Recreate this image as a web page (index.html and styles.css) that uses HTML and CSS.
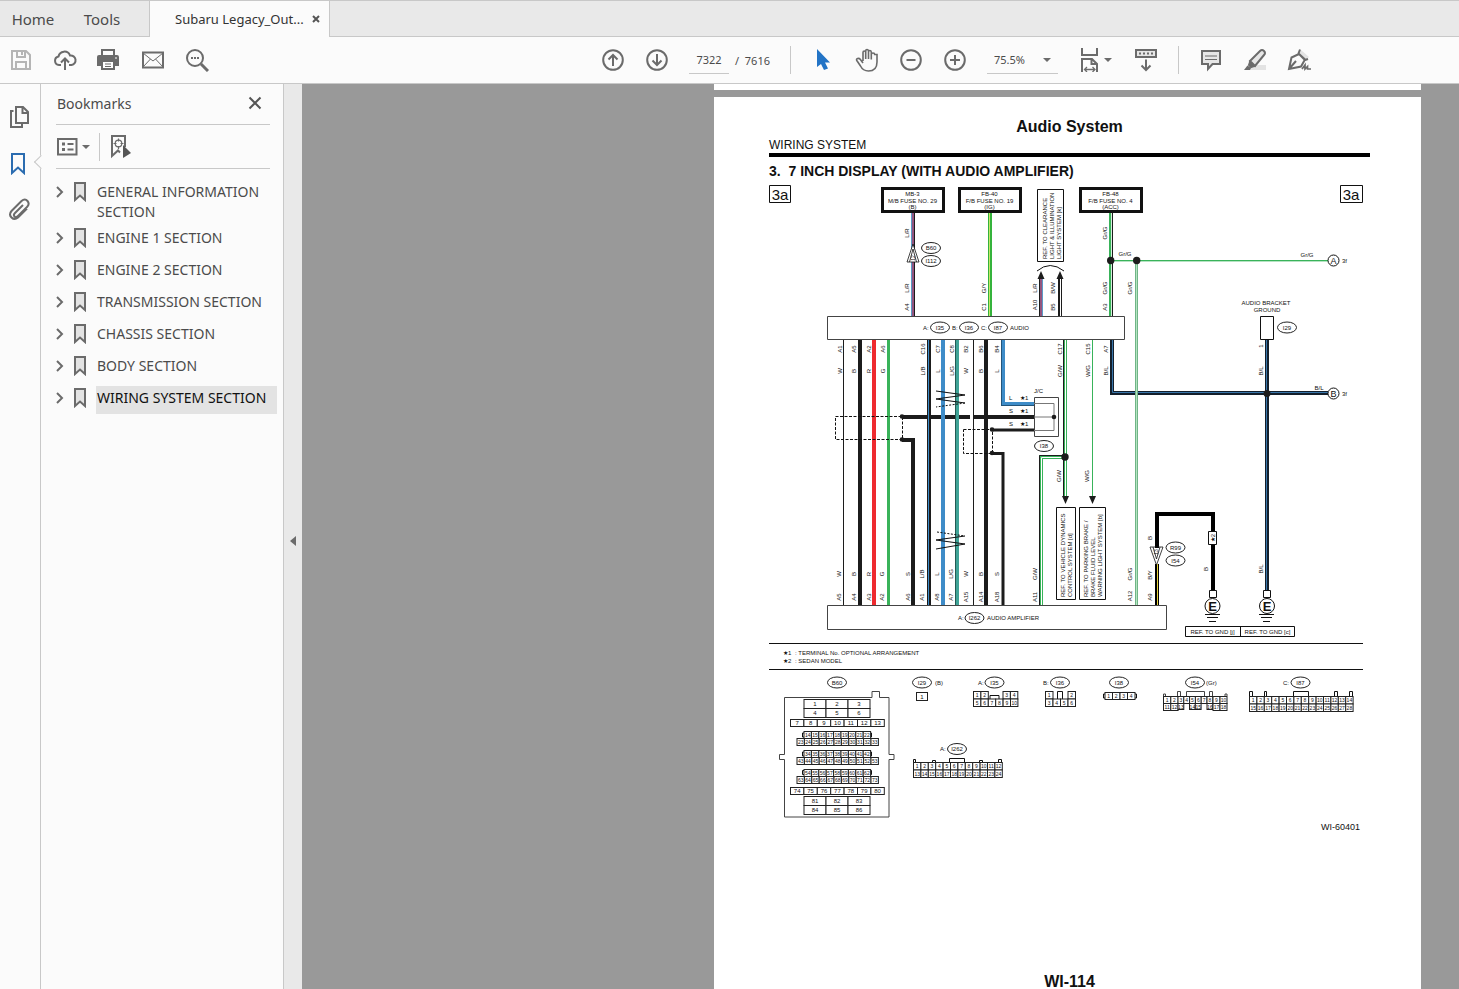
FILE: index.html
```
<!DOCTYPE html>
<html lang="en">

<head>
	<title>Subaru Legacy_Outback</title>
	<meta charset="utf-8">
	<meta name="viewport" content="width=device-width,initial-scale=1">
	<link rel="stylesheet" href="styles.css">
</head>

<body>
	<nav class="tabs">
		<button class="tab home">Home</button>
		<button class="tab tools">Tools</button>
		<div class="tab doc">
			<span>Subaru Legacy_Out...</span>
			<button class="tab-close" aria-label="Close tab"><svg width="8" height="8" viewBox="0 0 8 8"><path d="M1 1l6 6M7 1L1 7" stroke="#555" stroke-width="2"/></svg></button>
		</div>
	</nav>

	<header class="toolbar">
		<button class="icon" aria-label="Save"><svg viewBox="0 0 24 24"><g class="faint"><path d="M3 3h14l4 4v14H3z"/><path d="M8 3v6h8V3M13 4v3M7 21v-7h10v7"/></g></svg></button>
		<button class="icon" aria-label="Upload"><svg viewBox="0 0 24 24"><path d="M8 17H6a4.300 4.300 0 0 1-.5-8.500A6 6 0 0 1 17 7.500a4.800 4.800 0 0 1 1.500 9.500H16M12 22V11M8 14.500l4-4 4 4"/></svg></button>
		<button class="icon" aria-label="Print"><svg viewBox="0 0 24 24"><path d="M5 8V2h12v6"/><path d="M0 9Q0 7 2 7h18Q22 7 22 9v9H0z" fill="#6b6b6b" stroke="none"/><path d="M5 13h12v8H5z" fill="#fff"/><path d="M8 16h6M8 18.500h6" stroke-width="1"/><path d="M18 10h2" stroke="#fff" stroke-width="1"/></svg></button>
		<button class="icon" aria-label="Mail"><svg viewBox="0 0 24 24"><path d="M2 4.500h20v15H2z"/><path d="M2 5l10 8 10-8M2 19l7.500-8M22 19l-7.500-8" stroke-width="1"/></svg></button>
		<button class="icon" aria-label="Search"><svg viewBox="0 0 24 24"><circle cx="10" cy="10" r="8"/><path d="M16 16l7 7" stroke-width="3"/><path d="M6 10h2M9 10h2M12 10h2"/></svg></button>

		<div class="main-tools">
			<button class="icon" aria-label="Previous page"><svg viewBox="0 0 24 24"><circle cx="12" cy="12" r="9.800"/><path d="M12 18V7M7.500 11.500L12 7l4.500 4.500"/></svg></button>
			<button class="icon" aria-label="Next page"><svg viewBox="0 0 24 24"><circle cx="12" cy="12" r="9.800"/><path d="M12 6v11M7.500 12.500L12 17l4.500-4.500"/></svg></button>
			<div class="pager">
				<input type="text" value="7322" aria-label="Page number">
				<span>/&nbsp; 7616</span>
			</div>
			<span class="sep"></span>
			<button class="icon" aria-label="Select"><svg viewBox="0 0 24 24"><path d="M6 1v18l4-3 3 6 4-1.500-3-6h5z" fill="#2374c6" stroke="none"/></svg></button>
			<button class="icon" aria-label="Hand"><svg viewBox="0 0 24 24"><path d="M8 13V4.500q0-1.500 1.300-1.500t1.400 1.500V11V3q0-1.500 1.300-1.500T13.500 3v8V4q0-1.500 1.300-1.500T16.300 4v7.500V6.500q0-1.500 1.700-1.500t1.700 1.500H22V14q0 9-8.500 9-5.500 0-8-5L1.800 12.500q-.8-1.500.8-2t2.800 1L8 15" stroke-width="1.600"/></svg></button>
			<button class="icon" aria-label="Zoom out"><svg viewBox="0 0 24 24"><circle cx="12" cy="12" r="9.800"/><path d="M7.500 12h9"/></svg></button>
			<button class="icon" aria-label="Zoom in"><svg viewBox="0 0 24 24"><circle cx="12" cy="12" r="9.800"/><path d="M7 12h10M12 7v10"/></svg></button>
			<div class="zoom">
				<select aria-label="Zoom level"><option>75.5%</option></select>
				<i class="caret"></i>
			</div>
			<button class="icon wide" aria-label="Fit page"><svg viewBox="0 0 24 24"><path d="M4 0v7h15V0M4 24V11h10l5 5v8M13.500 11v5H19"/><path d="M7 21.500h10M9 19l-2.500 2.500L9 24M14.500 19l2.500 2.500-2.500 2.500" stroke-width="1.300"/></svg><i class="caret"></i></button>
			<button class="icon" aria-label="Scroll"><svg viewBox="0 0 24 24"><path d="M2 2h20v7H2z" fill="#e6e6e6"/><path d="M5 5.500h14" stroke-dasharray="2 2"/><path d="M12 11.500v10M7.500 17.500l4.500 4.500 4.500-4.500"/></svg></button>
			<span class="sep"></span>
			<button class="icon" aria-label="Comment"><svg viewBox="0 0 24 24"><path d="M3 3h18v13h-7.500L9 21v-5H3z" fill="#e6e6e6"/><path d="M6 8h12M6 11.500h12" stroke-width="1.200"/></svg></button>
			<button class="icon" aria-label="Highlight"><svg viewBox="0 0 24 24"><path d="M9 17h14v5H4z" fill="#e3e3e3" stroke="none"/><path d="M7 13L17 3q2-2 4 0t0 4l-9 11z" fill="#e6e6e6"/><path d="M7 14l4 4-3 1-2-2z" fill="#6b6b6b"/><path d="M1 22l3.500-4.500L8 20l-1 2z" fill="#6b6b6b" stroke="none"/></svg></button>
			<button class="icon" aria-label="Sign"><svg viewBox="0 0 24 24"><path d="M14 2l8 7-3 3-8-7z" fill="#e3e3e3" stroke="none"/><path d="M2 21L4.500 9.500 12 6l6 5.500-4 7zM2 21l7-8M13 1.500l-1.500 4L18 12l3-1"/><path d="M15 21l3-4v4l2.500-2.500v2.500H24" stroke-width="1.700"/></svg></button>
		</div>
	</header>

	<div class="workspace">
		<aside class="rail">
			<button class="icon" aria-label="Page thumbnails"><svg viewBox="0 0 24 24"><path d="M9 2h7l5 5v11H9zM15.500 2v6H21M6.500 6H4v16h11v-3"/></svg></button>
			<button class="icon active" aria-label="Bookmarks"><svg viewBox="0 0 24 24"><path d="M5 3h12v19l-6-5.500L5 22z" stroke="#2b6cb0"/></svg></button>
			<button class="icon" aria-label="Attachments"><svg viewBox="0 0 24 24"><path d="M16 8l-8 8q-2 2-.5 3.500t3.500-.5l9-9q3-3 .5-6t-6 0l-10 10q-3 3.500 0 6.500t6.500 0l9-9"/></svg></button>
		</aside>

		<section class="panel">
			<div class="panel-head">
				<h2>Bookmarks</h2>
				<button class="panel-close" aria-label="Close panel"><svg width="14" height="14" viewBox="0 0 14 14"><path d="M1.500 1.500l11 11M12.500 1.500l-11 11" stroke="#555" stroke-width="2"/></svg></button>
			</div>
			<div class="panel-tools">
				<button class="icon wide" aria-label="Options"><svg viewBox="0 0 24 24"><path d="M2 4h18.500v15.500H2z"/><path d="M6 9h3M6 14.500h3" stroke-width="3"/><path d="M11.500 9h6M11.500 14.500h6"/></svg><i class="caret"></i></button>
				<span class="sep"></span>
				<button class="icon" aria-label="Find current bookmark"><svg viewBox="0 0 24 24"><path d="M13 17.500l-2-2L5 21V1h13v11"/><circle cx="11.500" cy="8.500" r="3.300" stroke-width="1.200"/><path d="M11.500 3.500v3M11.500 11v3M6.500 8.500h3M13.500 8.500h3" stroke-width="1.200"/><path d="M16 10v13l8-5z" fill="#555" stroke="none"/></svg></button>
			</div>
			<ul class="bookmarks" id="bookmarks"></ul>
		</section>

		<button class="gutter" aria-label="Collapse panel"></button>

		<main class="viewer">
			<div class="sheet previous"></div>
			<article class="sheet">
				<h1>Audio System</h1>
				<p class="chapter">WIRING SYSTEM</p>
				<h3>3.&nbsp; 7 INCH DISPLAY (WITH AUDIO AMPLIFIER)</h3>
				<svg class="diagram" viewBox="769 184 601 651" role="img" aria-label="Audio system wiring diagram">
					<!-- boxes -->
					<g class="box">
						<path d="M769.500 185.500h21v17h-21zM1340.500 185.500h22v17h-22z"/>
						<path d="M882.500 188.500h61v23h-61zM959.500 188.500h61v23h-61zM1080.500 188.500h61v23h-61z" stroke-width="3"/>
						<path d="M1037.500 189.500h26v72h-26zM1056.500 507.500h19v92h-19zM1079.500 507.500h26v92h-26z"/>
						<path d="M827.500 316.500h297v23h-297zM827.500 605.500h339v24h-339z" stroke="#444"/>
						<path d="M1260.500 316.500h13v23h-13z"/>
						<path d="M1185.500 626.500h109v10h-109zM1240.500 626.500v10"/>
						<path d="M769 643.500h594M769 669.500h594"/>
						<path d="M1037 271q13-11 27 0"/>
					</g>
					<g id="wires"></g>
					<!-- shields and junction -->
					<g class="box">
						<path d="M835.500 416.500h67v23h-67zM963.500 429.500h29v24h-29z" stroke-dasharray="3 1.500"/>
						<path d="M1034.500 397.500h24v39h-24z" fill="#fff" stroke="#444"/>
						<path d="M1034 403.500h20v27h-20M1034 417h20" stroke="#777"/>
						<path d="M936 391l29 4-29 4 29 4M965 536l-29 4 29 4-29 5"/>
						<path d="M965 403l-29 4M937 532l28 4" stroke-dasharray="2 1.500"/>
						<path d="M913 244l6 18h-12zM913 249l3.500 13M913 249l-3.500 13M1150 547h13l-6.500 18zM1153 547l3.500 12 3.500-12" fill="#fff" stroke-width="0.800"/>
						<path d="M1208.500 531.500h8v13h-8zM1209.500 590.500h7v7h-7zM1263.500 590.500h7v7h-7z" fill="#fff"/>
						<path d="M1205 614.500h15M1207 617.500h11M1209 621.500h7M1259 614.500h15M1261 617.500h11M1263 621.500h7"/>
						<circle cx="1212.500" cy="606" r="7.500" fill="#fff"/>
						<circle cx="1267" cy="606" r="7.500" fill="#fff"/>
						<circle cx="1333.500" cy="260.500" r="5.500" fill="#fff"/>
						<circle cx="1333.500" cy="393.500" r="5.500" fill="#fff"/>
					</g>
					<!-- junction dots and arrow heads -->
					<g class="solid">
						<circle cx="1110.700" cy="260.500" r="3.700"/><circle cx="1136.700" cy="260.500" r="3.700"/>
						<circle cx="1267" cy="393.500" r="3.500"/><circle cx="1065" cy="457" r="3.700"/>
						<circle cx="902" cy="416.500" r="2.300"/><circle cx="902" cy="439.500" r="2.300"/>
						<circle cx="992" cy="429.500" r="2.300"/><circle cx="992" cy="453" r="2.300"/><circle cx="1054" cy="417" r="2.300"/>
						<path d="M1041 271l3.500 8h-7zM1060 271l3.500 8h-7zM1065.500 504l-3.500-8h7zM1092.500 504l-3.500-8h7z"/>
					</g>
					<g id="labels"></g>
					<!-- connector housings -->
					<g class="box">
						<path d="M784.500 697.500h87.500v-6h7.500v6h9.500v57h5v5h-5v57.500h-104.500v-57.500h-5v-5h5z" stroke="#444"/>
						<path d="M990 699v-3.500h9v3.500M1057.500 699v-7.500h5v7.500M1105 694h-1.500v4h1.500M1135 694h1.500v4h-1.500"/>
						<path d="M1163.500 696v-2h2v2M1177.500 696v-4.500h3v4.500M1186.500 696v-4.500h18v4.500M1209.500 696v-4.500h3v4.500M1225 696v-2h2v2" stroke="#444"/>
						<path d="M1249.500 696v-4.500h3v4.500M1264.500 696v-4.500h2v4.500M1293.500 696v-4.500h15v4.500M1334.500 696v-4.500h3v4.500M1349.500 696v-4.500h3v4.500"/>
						<path d="M913.500 762v-2.500h2v2.500M932.500 762v-1.500h3v1.500M949.500 762v-3.500h15v3.500M979.500 762v-1.500h3v1.500M998.500 762v-2.500h3v2.500"/>
						<path d="M804 733h-1.500v4h1.500M804 752h-1.500v4h1.500M804 770.500h-1.500v4h1.500M870.500 733h1v4h-1M870.500 752h1v4h-1M870.500 770.500h1v4h-1"/>
					</g>
					<g id="pins"></g>
				</svg>
				<footer>WI-114</footer>
			</article>
		</main>
	</div>
	<script src="script.js"></script>
</body>

</html>
```
FILE: styles.css
```
* {
	box-sizing: border-box;
}

body {
	margin: 0;
	height: 100vh;
	overflow: hidden;
	display: flex;
	flex-direction: column;
	background-color: #fbfbfb;
	color: #4b4b4b;
	font-family: "Noto Sans", sans-serif;
	font-size: 14px;
}

button {
	padding: 0;
	border: 0;
	background: none;
	color: inherit;
	font-family: inherit;
}

h1, h2, h3, p, ul {
	margin: 0;
	padding: 0;
	font-weight: normal;
}

/* tab strip */
.tabs {
	display: flex;
	height: 37px;
	flex-shrink: 0;
	background-color: #e9e9e9;
	border-top: 1px solid #c8c8c8;
	border-bottom: 1px solid #c8c8c8;
}

.tab {
	font-size: 15px;
}

.home {
	width: 66px;
}

.tools {
	width: 83px;
	padding-right: 11px;
}

.doc {
	width: 181px;
	height: 36px;
	display: flex;
	align-items: center;
	justify-content: space-between;
	padding: 0 9px 0 25px;
	background-color: #fbfbfb;
	border-left: 1px solid #c8c8c8;
	border-right: 1px solid #c8c8c8;
	font-size: 13px;
	color: #333;
}

.tab-close {
	display: flex;
}

/* toolbar */
.toolbar {
	display: flex;
	align-items: center;
	gap: 20px;
	height: 47px;
	flex-shrink: 0;
	padding-left: 9px;
	border-bottom: 1px solid #c8c8c8;
}

.main-tools {
	display: flex;
	align-items: center;
	gap: 20px;
	margin-left: 372px;
}

.icon {
	width: 24px;
	height: 24px;
	flex-shrink: 0;
	display: flex;
	align-items: center;
	justify-content: space-between;
}

.icon svg {
	width: 24px;
	height: 24px;
	flex-shrink: 0;
	fill: none;
	stroke: #6b6b6b;
	stroke-width: 2;
}

.wide {
	width: 34px;
	margin-right: 2px;
}

.faint {
	stroke: #b5b5b5;
}

.caret {
	border: 4px solid transparent;
	border-top: 4px solid #6b6b6b;
	border-bottom: 0;
}

.sep {
	width: 1px;
	height: 28px;
	background-color: #c8c8c8;
}

.pager {
	display: flex;
	align-items: center;
	gap: 6px;
	font-size: 11px;
}

.pager input {
	width: 40px;
	height: 28px;
	padding: 0;
	border: 0;
	border-bottom: 1px solid #c8c8c8;
	background: none;
	text-align: center;
	font: inherit;
	color: inherit;
}

.pager span {
	width: 35px;
	white-space: nowrap;
}

.zoom {
	display: flex;
	align-items: center;
	width: 71px;
	height: 28px;
	padding: 0 7px;
	border-bottom: 1px solid #c8c8c8;
}

.zoom select {
	flex: 1;
	appearance: none;
	border: 0;
	background: none;
	font-family: inherit;
	font-size: 11px;
	color: inherit;
}

/* work area */
.workspace {
	flex: 1;
	display: flex;
	min-height: 0;
}

.rail {
	width: 41px;
	display: flex;
	flex-direction: column;
	gap: 22px;
	padding: 21px 0 0 7px;
	border-right: 1px solid #c8c8c8;
}

.active {
	position: relative;
}

/* notch that points from the panel to the open tab */
.active::after {
	content: "";
	position: absolute;
	left: 29px;
	top: 6px;
	width: 9px;
	height: 9px;
	background-color: #fbfbfb;
	border-left: 1px solid #c8c8c8;
	border-bottom: 1px solid #c8c8c8;
	transform: rotate(45deg);
}

.panel {
	width: 243px;
	padding-left: 15px;
	border-right: 1px solid #c8c8c8;
}

.panel-head,
.panel-tools {
	display: flex;
	align-items: center;
	margin-right: 13px;
	border-bottom: 1px solid #c8c8c8;
}

.panel-head {
	height: 41px;
	justify-content: space-between;
	padding: 0 8px 2px 1px;
}

.panel-head h2 {
	font-size: 14px;
}

.panel-close {
	display: flex;
}

.panel-tools {
	height: 44px;
	gap: 7px;
}

.bookmarks {
	list-style: none;
	display: flex;
	flex-direction: column;
	gap: 4px;
	padding: 11px 6px 0 0;
}

.bookmarks li {
	display: flex;
	align-items: flex-start;
}

.bookmarks svg {
	flex-shrink: 0;
	margin-top: 2px;
}

.bookmarks a {
	flex: 1;
	min-height: 28px;
	margin-left: 8px;
	padding: 2px 0 0 1px;
	line-height: 20px;
	color: inherit;
	text-decoration: none;
}

.bookmarks .current {
	background-color: #e3e3e3;
	color: #111;
}

.gutter {
	width: 18px;
	display: flex;
	align-items: center;
	justify-content: center;
	padding-top: 8px;
	background-color: #e9e9e9;
}

.gutter::after {
	content: "";
	border: 5px solid transparent;
	border-right: 6px solid #6b6b6b;
	border-left: 0;
}

/* document */
.viewer {
	flex: 1;
	min-width: 0;
	display: flex;
	flex-direction: column;
	align-items: flex-end;
	gap: 7px;
	padding-right: 38px;
	overflow: hidden;
	background-color: #999;
}

.sheet {
	width: 707px;
	flex: 1;
	padding: 20px 51px 0 55px;
	background-color: #fff;
	color: #111;
	font-family: "Liberation Sans", Arial, sans-serif;
}

.previous {
	flex: none;
	height: 6px;
	padding: 0;
}

.sheet h1 {
	font-size: 16px;
	font-weight: bold;
	line-height: 20px;
	text-align: center;
}

.chapter {
	padding-top: 1px;
	font-size: 12px;
	line-height: 15px;
	border-bottom: 4px solid #000;
}

.sheet h3 {
	padding-top: 4px;
	font-size: 14px;
	font-weight: bold;
	line-height: 20px;
}

.diagram {
	display: block;
	width: 100%;
	margin-top: 3px;
	fill: #111;
	font-size: 6px;
}

.box {
	fill: none;
	stroke: #111;
}

.solid {
	fill: #1c1c1c;
}

.bubble {
	fill: #fff;
	stroke: #222;
}

.pin {
	fill: #fff;
	stroke: #222;
	stroke-width: 1;
}

.middle {
	text-anchor: middle;
}

.small {
	font-size: 5px;
}

.figure-no {
	font-size: 9px;
}

.mark {
	font-size: 15px;
}

.earth {
	font-size: 13px;
	font-weight: bold;
}

footer {
	margin-top: 137px;
	text-align: center;
	font-size: 16px;
	font-weight: bold;
	line-height: 20px;
}
```
FILE: script.js
```
var NS = "http://www.w3.org/2000/svg";

function add(parent, name, attrs, text) {
	var el = document.createElementNS(NS, name);
	for (var key in attrs) {
		el.setAttribute(key, attrs[key]);
	}
	if (text !== undefined) {
		el.textContent = text;
	}
	document.getElementById(parent).appendChild(el);
}

// bookmark list
["GENERAL INFORMATION SECTION", "ENGINE 1 SECTION", "ENGINE 2 SECTION", "TRANSMISSION SECTION",
	"CHASSIS SECTION", "BODY SECTION", "WIRING SYSTEM SECTION"].forEach(function (name, i) {
	var li = document.createElement("li");
	li.innerHTML = '<svg width="32" height="20" viewBox="0 0 32 20" fill="none" stroke="#6b6b6b" stroke-width="2">' +
		'<path d="M1 5l5 5-5 5"/><path d="M19 1h10v17l-5-4.500-5 4.500z" fill="#e3e3e3"/></svg>' +
		'<a href="#"' + (i == 6 ? ' class="current"' : '') + '>' + name + '</a>';
	document.getElementById("bookmarks").appendChild(li);
});

// wires: path, then colour and width pairs painted over each other
var black = "#1c1c1c", blue = "#3e8cc8", green = "#39b35a", red = "#ee2a2f";
function wire(d) {
	for (var i = 1; i < arguments.length; i += 2) {
		add("wires", "path", { d: d, fill: "none", stroke: arguments[i], "stroke-width": arguments[i + 1] });
	}
}
wire("M911.500 213v103", "#5b9bc8", 1);
wire("M913 213v103", "#93557f", 2);
wire("M914.500 213v103", black, 1);
wire("M990 213v103", "#35b33c", 4);
wire("M989.500 213v103", "#c8e66a", 1);
wire("M1041 278v38", black, 4);
wire("M1041 278v38", "#93557f", 2);
wire("M1042.500 278v38", "#5b9bc8", 1);
wire("M1060 278v38", black, 4);
wire("M1060.500 278v38", "#fff", 1);
wire("M1110 213v103", green, 2);
wire("M1111.500 213v103", "#d8eedd", 1);
wire("M1112.500 213v103", black, 1);
wire("M1110 260.500h218", green, 1);
wire("M1110 261.500h218", "#b5e3c2", 1);
wire("M1112 340v53h216", "#14202c", 4);
wire("M1112.500 340v52.500h215.500", "#3976ab", 1);
wire("M1267 340v251", "#14202c", 4);
wire("M1266.500 340v251", "#3976ab", 1);
wire("M1136.500 260v345", "#6fb586", 3, "#b5e3c2", 1);

wire("M843.500 340v265", black, 1);
wire("M860 340v265", black, 4);
wire("M874 340v265", red, 4);
wire("M888.500 340v265", green, 3);
wire("M902 417h68M974 417h60", black, 4);
wire("M902 440h11v165", black, 4);
wire("M929 340v265", black, 4);
wire("M928.500 340v265", blue, 1);
wire("M943 340v265", blue, 4);
wire("M957 340v265", "#245b54", 4);
wire("M957.500 340v265", "#3fa396", 3);
wire("M973.500 340v265", black, 1);
wire("M986 340v265", black, 4);
wire("M1003 340v64h31", "#24557a", 4);
wire("M1003.500 340v63.500h31", blue, 3);
wire("M992 430h42", black, 3);
wire("M992 453.500h11v151.500", black, 3);
wire("M1065 340v157", green, 4);
wire("M1065.500 340v157", "#fff", 1);
wire("M1063.500 340v157", black, 1);
wire("M1065 457h-24v148", green, 4);
wire("M1065 457.500h-23.500v147.500", "#fff", 1);
wire("M1065 455.500h-25.500v149.500", black, 1);
wire("M1092.500 340v157", green, 1);
wire("M1157 548v-34h56v77", "#000", 4);
wire("M1157 564v41", "#000", 4);
wire("M1157.500 564v41", "#e6d33c", 1);

// horizontal and vertical labels
function label(x, y, text, cls) {
	add("labels", "text", { x: x, y: y, "class": cls || "" }, text);
}
function upright(x, y, text, cls) {
	add("labels", "text", { x: 0, y: 0, transform: "translate(" + x + " " + y + ") rotate(-90)", "class": cls || "middle" }, text);
}
function bubble(x, y, text) {
	add("labels", "ellipse", { cx: x, cy: y, rx: 9.5, ry: 5.5, "class": "bubble" });
	label(x, y + 2, text, "middle");
}

[[912.500, "MB-3", "M/B FUSE NO. 29", "(B)"], [989.500, "FB-40", "F/B FUSE NO. 19", "(IG)"],
	[1110.500, "FB-48", "F/B FUSE NO. 4", "(ACC)"]].forEach(function (f) {
	label(f[0], 196, f[1], "middle");
	label(f[0], 203, f[2], "middle");
	label(f[0], 209, f[3], "middle");
});
label(780, 200, "3a", "middle mark");
label(1351, 200, "3a", "middle mark");
upright(1047, 259, "REF. TO CLEARANCE", "ref");
upright(1054, 259, "LIGHT & ILLUMINATION", "ref");
upright(1061, 259, "LIGHT SYSTEM [k]", "ref");
upright(1065, 597, "REF. TO VEHICLE DYNAMICS", "ref");
upright(1072, 597, "CONTROL SYSTEM [d]", "ref");
upright(1088, 597, "REF. TO PARKING BRAKE /", "ref");
upright(1095, 597, "BRAKE FLUID LEVEL", "ref");
upright(1102, 597, "WARNING LIGHT SYSTEM [b]", "ref");

// [x, centre y, text]
[[909, 233, "L/R"], [909, 288, "L/R"], [909, 307, "A4"], [986, 288, "G/Y"], [986, 307, "C1"],
	[1037, 288, "L/R"], [1037, 305, "A10"], [1055, 288, "B/W"], [1055, 307, "B5"],
	[1107, 233, "Gr/G"], [1107, 288, "Gr/G"], [1107, 307, "A3"], [1132, 288, "Gr/G"],
	[1263, 346, "1"], [1263, 371, "B/L"], [1263, 569, "B/L"], [1061, 476, "G/W"], [1089, 476, "W/G"],
	[1132, 574, "Gr/G"], [1132, 596, "A12"], [1152, 538, "B"], [1152, 575, "B/Y"], [1152, 597, "A9"],
	[1208, 569, "B"], [1215, 538, "★2"]].forEach(function (l) {
	upright(l[0], l[1], l[2]);
});
upright(915, 258, "12", "middle small");
upright(1158, 552, "13", "middle small");
// pins leaving the audio unit
[[842, "A1", "W"], [856, "A5", "B"], [871, "A2", "R"], [885, "A6", "G"], [925, "C16", "L/B"], [940, "C7", "L"],
	[954, "C8", "L/G"], [968, "B2", "W"], [983, "B6", "B"], [999, "B4", "L"], [1062, "C17", "G/W"],
	[1090, "C15", "W/G"], [1108, "A7", "B/L"]].forEach(function (p) {
	upright(p[0], 349, p[1]);
	upright(p[0], 371, p[2]);
});
// pins entering the amplifier
[[841, "A5", "W"], [856, "A4", "B"], [871, "A3", "R"], [884, "A2", "G"], [910, "A6", "S"], [924, "A1", "L/B"],
	[939, "A8", "L"], [953, "A7", "L/G"], [968, "A15", "W"], [983, "A14", "B"], [999, "A18", "S"],
	[1037, "A11", "G/W"]].forEach(function (p) {
	upright(p[0], 574, p[2]);
	upright(p[0], 597, p[1]);
});

label(1125, 256, "Gr/G", "middle");
label(1307, 257, "Gr/G", "middle");
label(1319, 390, "B/L", "middle");
label(1342, 263, "3f", "page-ref");
label(1342, 396, "3f", "page-ref");
label(1333.500, 264, "A", "middle figure-no");
label(1333.500, 397, "B", "middle figure-no");
label(1266, 305, "AUDIO BRACKET", "middle");
label(1267, 312, "GROUND", "middle");
label(1034, 393, "J/C");
label(1009, 400, "L");
label(1009, 413, "S");
label(1009, 426, "S");
label(1020, 400, "★1");
label(1020, 413, "★1");
label(1020, 426, "★1");
label(1212.500, 611, "E", "middle earth");
label(1267, 611, "E", "middle earth");
label(1212.500, 634, "REF. TO GND [j]", "middle");
label(1267.500, 634, "REF. TO GND [c]", "middle");
label(783, 655, "★1");
label(795, 655, ": TERMINAL No. OPTIONAL ARRANGEMENT");
label(783, 663, "★2");
label(795, 663, ": SEDAN MODEL");
label(923, 330, "A:");
label(952, 330, "B:");
label(981, 330, "C:");
label(1010, 330, "AUDIO");
label(958, 620, "A:");
label(987, 620, "AUDIO AMPLIFIER");
label(935, 685, "(B)");
label(978, 685, "A:");
label(1043, 685, "B:");
label(1206, 685, "(Gr)");
label(1283, 685, "C:");
label(940, 751, "A:");
label(1321, 830, "WI-60401", "figure-no");

[[931, 248, "B60"], [931, 261, "I112"], [940, 327.500, "I35"], [969, 327.500, "I36"], [998, 327.500, "I87"],
	[1287, 327.500, "I29"], [1044, 446, "I38"], [1175.500, 547.500, "R99"], [1175.500, 560.500, "I54"],
	[974.500, 618, "I262"], [837, 682.500, "B60"], [922, 682.500, "I29"], [994.500, 682.500, "I35"],
	[1060, 682.500, "I36"], [1119, 682.500, "I38"], [1195, 682.500, "I54"], [1300.500, 682.500, "I87"],
	[957, 749, "I262"]].forEach(function (b) {
	bubble(b[0], b[1], b[2]);
});

// row of numbered connector pins
function pins(x, y, w, h, first, count) {
	for (var i = 0; i < count; i++) {
		add("pins", "rect", { x: x + i * w, y: y, width: w, height: h, "class": "pin" });
		add("pins", "text", { x: x + (i + 0.5) * w, y: y + h / 2 + 2, "class": w < 9 ? "middle small" : "middle" }, first + i);
	}
}
pins(804, 699.5, 22, 9, 1, 3);
pins(804, 708.5, 22, 9, 4, 3);
pins(790.5, 719.5, 13.4, 7, 7, 7);
pins(804, 731.5, 7.4, 7, 14, 9);
pins(797, 738.5, 7.4, 7, 23, 11);
pins(804, 750.5, 7.4, 7, 34, 9);
pins(797, 757.5, 7.4, 7, 43, 11);
pins(804, 769.5, 7.4, 7, 54, 9);
pins(797, 776.5, 7.4, 7, 63, 11);
pins(790.5, 787.5, 13.4, 7, 74, 7);
pins(804, 796.5, 22, 9, 81, 3);
pins(804, 805.5, 22, 9, 84, 3);
pins(916.5, 692.5, 11, 8, 1, 1);
pins(973.5, 691.5, 7.4, 7.5, 1, 2);
pins(1003, 691.5, 7.4, 7.5, 3, 2);
pins(973.5, 699, 7.4, 7.5, 5, 6);
pins(1045.5, 691.5, 7.5, 7.5, 1, 1);
pins(1068, 691.5, 7.5, 7.5, 2, 1);
pins(1045.5, 699, 7.5, 7.5, 3, 4);
pins(1105, 692.5, 7.5, 7, 1, 4);
pins(1163.5, 696.5, 7.3, 7, 1, 2);
pins(1178, 696.5, 5.8, 7, 3, 6);
pins(1213, 696.5, 7, 7, 9, 2);
pins(1163.5, 703.5, 7.3, 7, 11, 2);
pins(1178, 703.5, 5.8, 6, 13, 1);
pins(1189.5, 703.5, 5.8, 6, 14, 2);
pins(1207, 703.5, 5.8, 6, 16, 1);
pins(1213, 703.5, 7, 7, 17, 2);
pins(1249.5, 696.5, 7.4, 7.5, 1, 14);
pins(1249.5, 704, 7.4, 7.5, 15, 14);
pins(913.5, 762.5, 7.4, 7.5, 1, 12);
pins(913.5, 770, 7.4, 7.5, 13, 12);
```
